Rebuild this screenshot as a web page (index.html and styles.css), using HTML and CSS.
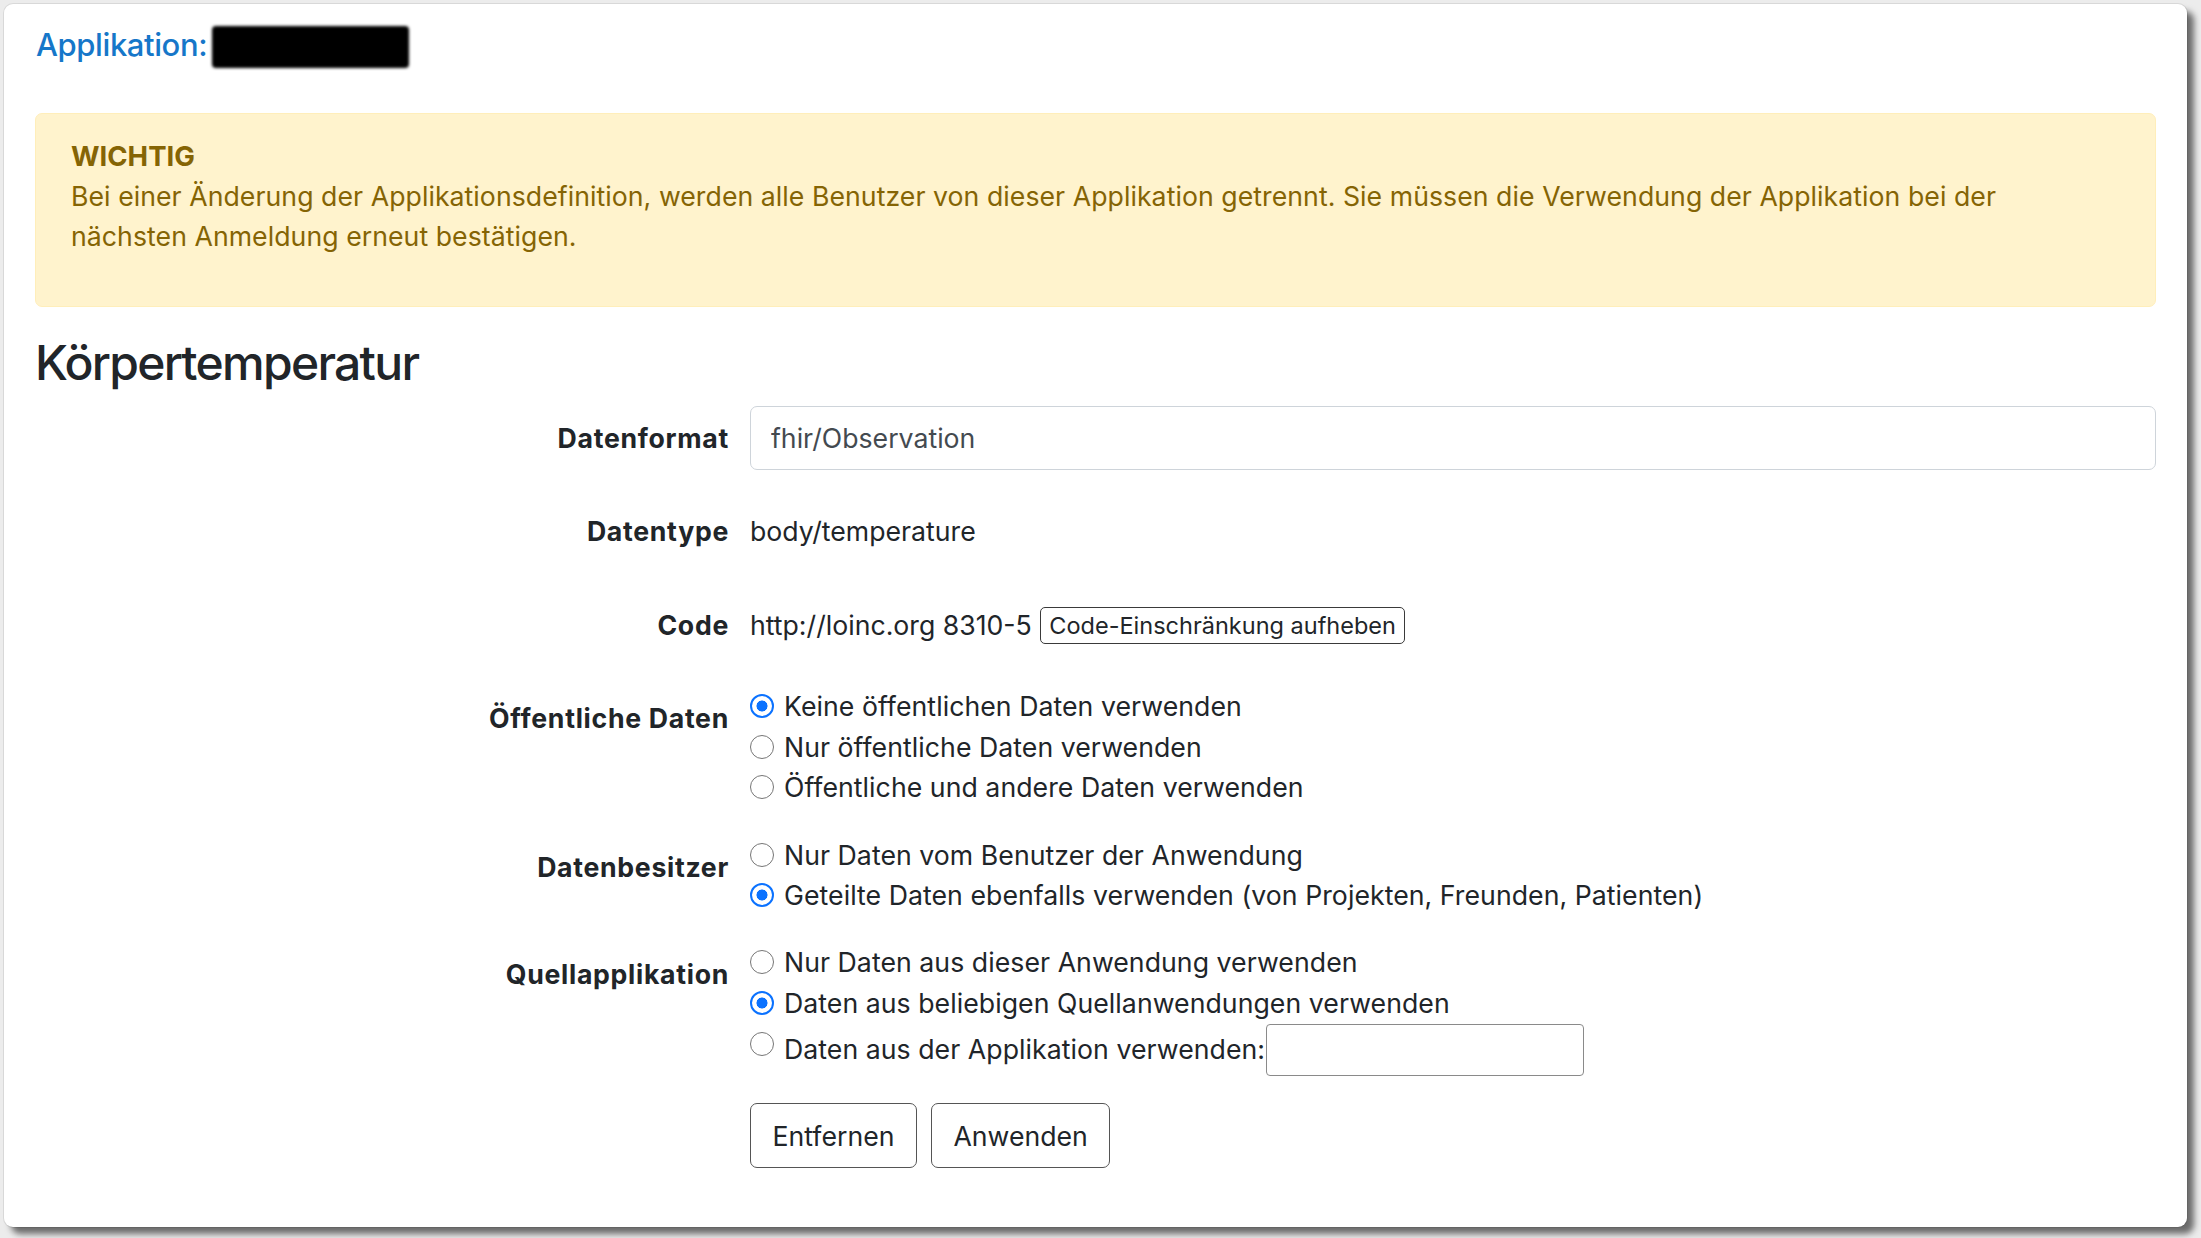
FILE: index.html
```html
<!DOCTYPE html>
<html lang="de">
<head>
<meta charset="utf-8">
<title>Applikation</title>
<link rel="stylesheet" href="styles.css">
</head>
<body>
<div class="window">
  <div class="app-title">
    <span class="app-label">Applikation:</span>
    <span class="redacted"></span>
  </div>

  <div class="alert">
    <div class="alert-heading">WICHTIG</div>
    <p class="alert-text">Bei einer Änderung der Applikationsdefinition, werden alle Benutzer von dieser Applikation getrennt. Sie müssen die Verwendung der Applikation bei der nächsten Anmeldung erneut bestätigen.</p>
  </div>

  <h3 class="title">Körpertemperatur</h3>

  <form class="form">
    <div class="row row-field">
      <label class="lbl">Datenformat</label>
      <div class="ctl"><input class="input" type="text" value="fhir/Observation"></div>
    </div>
    <div class="row row-field">
      <div class="lbl">Datentype</div>
      <div class="ctl plain">body/temperature</div>
    </div>
    <div class="row row-field">
      <div class="lbl">Code</div>
      <div class="ctl plain">http://loinc.org 8310-5 <button type="button" class="btn-small">Code-Einschränkung aufheben</button></div>
    </div>
    <div class="row">
      <div class="lbl">Öffentliche Daten</div>
      <div class="ctl radios">
        <label class="option"><input class="radio" type="radio" name="pub" checked><span>Keine öffentlichen Daten verwenden</span></label>
        <label class="option"><input class="radio" type="radio" name="pub"><span>Nur öffentliche Daten verwenden</span></label>
        <label class="option"><input class="radio" type="radio" name="pub"><span>Öffentliche und andere Daten verwenden</span></label>
      </div>
    </div>
    <div class="row">
      <div class="lbl">Datenbesitzer</div>
      <div class="ctl radios">
        <label class="option"><input class="radio" type="radio" name="own"><span>Nur Daten vom Benutzer der Anwendung</span></label>
        <label class="option"><input class="radio" type="radio" name="own" checked><span>Geteilte Daten ebenfalls verwenden (von Projekten, Freunden, Patienten)</span></label>
      </div>
    </div>
    <div class="row">
      <div class="lbl">Quellapplikation</div>
      <div class="ctl radios">
        <label class="option"><input class="radio" type="radio" name="src"><span>Nur Daten aus dieser Anwendung verwenden</span></label>
        <label class="option"><input class="radio" type="radio" name="src" checked><span>Daten aus beliebigen Quellanwendungen verwenden</span></label>
        <label class="option option-input"><input class="radio" type="radio" name="src"><span>Daten aus der Applikation verwenden:</span><input class="small-input" type="text"></label>
      </div>
    </div>
    <div class="row">
      <div></div>
      <div class="ctl actions">
        <button type="button" class="btn">Entfernen</button>
        <button type="button" class="btn">Anwenden</button>
      </div>
    </div>
  </form>
</div>
</body>
</html>
```

FILE: styles.css
```css
* { box-sizing: border-box; }

html, body {
  margin: 0;
  padding: 0;
}

body {
  background: #ececec;
  font-family: Inter, "Noto Sans", "Liberation Sans", sans-serif;
  font-size: 26.67px;
  line-height: 40px;
  color: #212529;
  width: 2201px;
  height: 1238px;
  overflow: hidden;
}

.window {
  margin: 4px 0 0 4px;
  width: 2183px;
  height: 1223px;
  background: #fff;
  border-radius: 9px;
  box-shadow: 0 0 0 1px rgba(0,0,0,0.08), 7px 7px 6px rgba(0,0,0,0.55);
  padding: 22px 31px 0 31px;
}

.app-title {
  display: flex;
  align-items: flex-start;
  height: 38px;
  margin-bottom: 48.5px;
}

.app-label {
  font-size: 31px;
  line-height: 38px;
  font-weight: 500;
  letter-spacing: -0.4px;
  color: #1677c9;
  padding-left: 1px;
}

.redacted {
  display: inline-block;
  width: 197px;
  height: 42px;
  margin: 0 0 0 5px;
  background: #000;
  border-radius: 4px;
  filter: blur(1.5px);
}

.alert {
  background: #fff3cd;
  border: 1.67px solid #ffeeba;
  color: #856404;
  border-radius: 7px;
  padding: 26.5px 52px 25px 35px;
  margin-bottom: 27px;
}

.alert-heading {
  font-size: 27.5px;
  line-height: 33px;
  font-weight: 700;
  margin-bottom: 3px;
}

.alert-text {
  margin: 0 0 25px 0;
  letter-spacing: 0.05px;
}

.title {
  font-size: 48px;
  line-height: 57.6px;
  font-weight: 500;
  letter-spacing: -1.7px;
  margin: 0 0 14px 0;
}

.row {
  display: grid;
  grid-template-columns: 694px 1fr;
  column-gap: 21px;
  margin-bottom: 26.67px;
}

.row-field {
  min-height: 66.5px;
  margin-bottom: 27px;
}

.lbl {
  text-align: right;
  font-weight: 700;
  letter-spacing: 0.7px;
  padding-top: 12px;
}

.input {
  display: block;
  width: 100%;
  height: 64px;
  padding: 0 20px;
  font: inherit;
  color: #444a50;
  background: #fff;
  border: 1.67px solid #ced4da;
  border-radius: 7px;
  outline: none;
}

.plain {
  padding-top: 12px;
}

.btn-small {
  font-family: inherit;
  font-size: 23.5px;
  line-height: 30px;
  height: 37px;
  padding: 0 8px;
  margin-left: 1px;
  color: #212529;
  background: #fff;
  border: 1.67px solid #3a3a3a;
  border-radius: 5px;
  vertical-align: 1px;
}

.radios {
  display: flex;
  flex-direction: column;
}

.option {
  display: flex;
  align-items: flex-start;
  min-height: 40.6px;
  line-height: 40.6px;
  letter-spacing: 0.05px;
}

.option-input {
  align-items: center;
}

.radio {
  appearance: none;
  -webkit-appearance: none;
  flex: none;
  width: 24px;
  height: 24px;
  margin: 8px 10px 0 0;
  border: 1.7px solid #767676;
  border-radius: 50%;
  background: #fff;
}

.option-input .radio {
  align-self: flex-start;
}

.radio:checked {
  border: 2.6px solid #0b72ff;
  background: radial-gradient(circle, #0b72ff 0 5.2px, #fff 5.8px);
}

.small-input {
  width: 318px;
  height: 52px;
  margin-left: 1px;
  font: inherit;
  border: 1.67px solid #8a8a8a;
  border-radius: 4px;
  background: #fff;
  outline: none;
}

.actions {
  display: flex;
  gap: 14px;
  padding-top: 1px;
}

.btn {
  font-family: inherit;
  font-size: 26.67px;
  line-height: 40px;
  height: 65px;
  padding: 0 21.5px;
  color: #212529;
  background: #fff;
  border: 1.67px solid #555;
  border-radius: 7px;
}
```
